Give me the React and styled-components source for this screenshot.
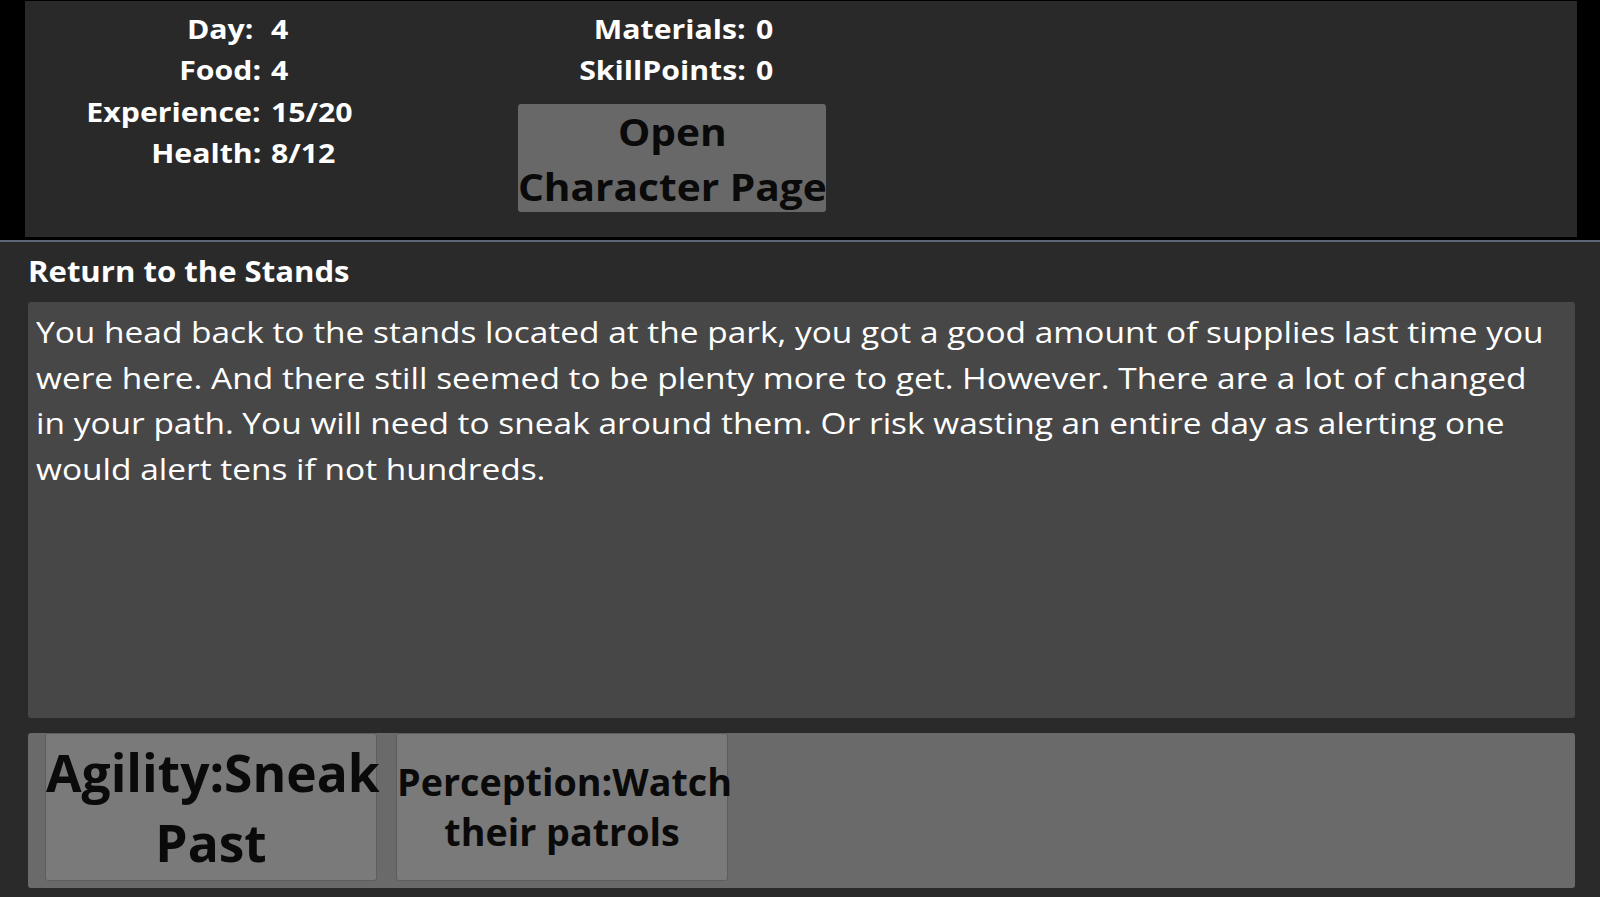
import React from "react";
import styled, { createGlobalStyle } from "styled-components";

const GlobalStyle = createGlobalStyle`
  html, body {
    margin: 0;
    padding: 0;
    background: #2a2a2a;
  }
  body {
    font-family: "Open Sans", "Liberation Sans", sans-serif;
  }
`;

const stats = [
  ["Day:", "4"],
  ["Food:", "4"],
  ["Experience:", "15/20"],
  ["Health:", "8/12"],
];

const resources = [
  ["Materials:", "0"],
  ["SkillPoints:", "0"],
];

const choices = [
  { label: "Agility:Sneak Past", size: 51.5, line: 70 },
  { label: "Perception:Watch their patrols", size: 37.7, line: 50 },
];

// the game's text is drawn a little wider than the font's own proportions
const TEXT_STRETCH = 1.12;

const StatRows = ({ rows, labelWidth }) => (
  <StatGrid $labelWidth={labelWidth}>
    {rows.map(([label, value]) => (
      <React.Fragment key={label}>
        <StatLabel $extra={label === "Day:"}>
          <Stretch $x={TEXT_STRETCH} $origin="right center">
            {label}
          </Stretch>
        </StatLabel>
        <StatValue>
          <Stretch $x={TEXT_STRETCH} $origin="left center">
            {value}
          </Stretch>
        </StatValue>
      </React.Fragment>
    ))}
  </StatGrid>
);

const App = () => {
  return (
    <Page>
      <GlobalStyle />
      <Header>
        <StatusPanel>
          <StatRows rows={stats} labelWidth={236} />
          <SideColumn>
            <StatRows rows={resources} labelWidth={228} />
            <CharacterButton>
              <Stretch $x={1.07} $origin="center">
                Open
                <br />
                Character Page
              </Stretch>
            </CharacterButton>
          </SideColumn>
        </StatusPanel>
      </Header>
      <Main>
        <EventTitle>
          <Stretch $x={1.11} $origin="left center">
            Return to the Stands
          </Stretch>
        </EventTitle>
        <StoryBox>
          <StoryText>
            You head back to the stands located at the park, you got a good
            amount of supplies last time you were here. And there still seemed
            to be plenty more to get. However. There are a lot of changed in
            your path. You will need to sneak around them. Or risk wasting an
            entire day as alerting one would alert tens if not hundreds.
          </StoryText>
        </StoryBox>
        <ChoiceBar>
          {choices.map((c) => (
            <ChoiceButton key={c.label} $size={c.size} $line={c.line}>
              {c.label}
            </ChoiceButton>
          ))}
        </ChoiceBar>
      </Main>
    </Page>
  );
};

const Page = styled.div`
  width: 1600px;
  height: 897px;
  display: flex;
  flex-direction: column;
  background: #2a2a2a;
  overflow: hidden;
`;

const Stretch = styled.span`
  display: inline-block;
  white-space: nowrap;
  transform: scaleX(${(props) => props.$x});
  transform-origin: ${(props) => props.$origin};
`;

const Header = styled.header`
  background: #000;
  padding: 1px 23px 3px 25px;
  border-bottom: 2px solid #5c6678;
`;

const StatusPanel = styled.div`
  height: 236px;
  box-sizing: border-box;
  background: #292929;
  padding-top: 7px;
  display: grid;
  grid-template-columns: 493px 308px;
  align-items: start;
`;

const StatGrid = styled.div`
  display: grid;
  grid-template-columns: ${(props) => props.$labelWidth}px auto;
  column-gap: 10px;
  font-size: 27px;
  font-weight: 700;
  line-height: 41.3px;
  color: #fff;
`;

const StatLabel = styled.span`
  text-align: right;
  padding-right: ${(props) => (props.$extra ? "8px" : "0")};
`;

const StatValue = styled.span`
  text-align: left;
`;

const SideColumn = styled.div`
  display: flex;
  flex-direction: column;
`;

const CharacterButton = styled.button`
  margin-top: 13px;
  width: 308px;
  height: 108px;
  padding: 0;
  border: none;
  border-radius: 3px;
  background: #686868;
  color: #0a0a0a;
  font-family: "Open Sans", "Liberation Sans", sans-serif;
  font-size: 38px;
  font-weight: 700;
  line-height: 55px;
  text-align: center;
`;

const Main = styled.main`
  flex: 1;
  display: flex;
  flex-direction: column;
  padding: 10px 25px 9px 28px;
`;

const EventTitle = styled.h2`
  margin: 0 0 12px 0;
  font-size: 28px;
  font-weight: 700;
  line-height: 38px;
  color: #fff;
`;

const StoryBox = styled.div`
  height: 416px;
  box-sizing: border-box;
  padding: 7px 8px;
  background: #474747;
  border-radius: 3px;
  color: #fff;
  font-size: 30px;
  font-weight: 400;
  line-height: 45.6px;
`;

const StoryText = styled.p`
  margin: 0;
  width: 1362px;
  transform: scaleX(1.115);
  transform-origin: left top;
`;

const ChoiceBar = styled.div`
  margin-top: 15px;
  height: 155px;
  box-sizing: border-box;
  padding: 0 0 6px 17px;
  display: flex;
  gap: 19px;
  background: #6a6a6a;
  border-radius: 3px;
`;

const ChoiceButton = styled.button`
  width: 332px;
  height: 148px;
  padding: 0;
  box-sizing: border-box;
  border: 1px solid #5d5d5d;
  border-radius: 3px;
  background: #7a7a7a;
  color: #0a0a0a;
  font-family: "Open Sans", "Liberation Sans", sans-serif;
  font-size: ${(props) => props.$size}px;
  font-weight: 700;
  line-height: ${(props) => props.$line}px;
  text-align: center;
  overflow: visible;
`;

export default App;
